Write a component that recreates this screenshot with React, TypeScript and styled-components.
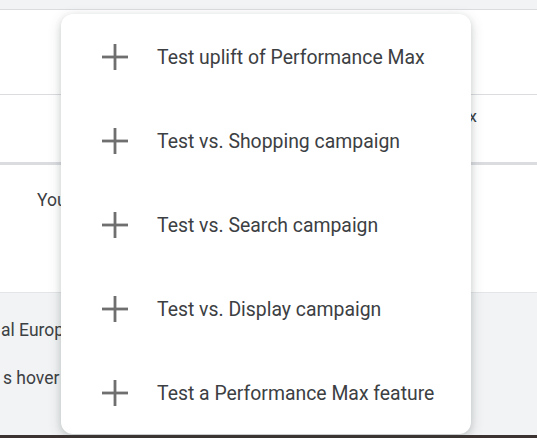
import React from "react";
import styled, { createGlobalStyle } from "styled-components";

const Global = createGlobalStyle`
  html, body { margin: 0; padding: 0; background: #ffffff; }
  body { font-family: Roboto, "Liberation Sans", Arial, sans-serif; overflow: hidden; }
`;

const Page = styled.div`
  position: relative;
  width: 537px;
  height: 438px;
  display: flex;
  flex-direction: column;
  overflow: hidden;
  background: #fff;
`;

const TopBand = styled.div`
  height: 9px;
  background: #f1f3f4;
  border-bottom: 1px solid #dadce0;
  flex: none;
`;

const Section = styled.div<{ $h: number; $border?: string; $bg?: string }>`
  height: ${(p) => p.$h}px;
  flex: none;
  background: ${(p) => p.$bg || "#fff"};
  border-bottom: ${(p) => p.$border || "none"};
  box-sizing: border-box;
  display: flex;
  flex-direction: column;
  color: #3c4043;
  white-space: nowrap;
`;

const HeaderCell = styled.div`
  display: flex;
  justify-content: flex-end;
  padding: 11px 60px 0 0;
  font-size: 17px;
  line-height: 20px;
  color: #3c4043;
`;

const BodyText = styled.div`
  padding: 25px 0 0 37px;
  font-size: 17.5px;
  line-height: 20px;
  color: #3c4043;
`;

const GreyText = styled.div<{ $top: number; $indent: number }>`
  margin-top: ${(p) => p.$top}px;
  padding-left: ${(p) => p.$indent}px;
  font-size: 17.5px;
  line-height: 20px;
  color: #3c4043;
`;

const BottomBar = styled.div`
  flex: 1;
  background: #3b3331;
`;

const Menu = styled.div`
  position: absolute;
  left: 61px;
  top: 14px;
  width: 410px;
  height: 420px;
  background: #fff;
  border-radius: 12px;
  box-shadow: 0 2px 6px rgba(60, 64, 67, 0.15), 0 4px 14px rgba(60, 64, 67, 0.18);
  display: flex;
  flex-direction: column;
  overflow: hidden;
`;

const Item = styled.div`
  height: 84px;
  flex: none;
  display: flex;
  align-items: center;
  padding: 3px 0 0 41px;
  box-sizing: border-box;
  gap: 29px;
  font-size: 19.4px;
  color: #3c4043;
`;

const PlusSvg = styled.svg`
  flex: none;
  margin-top: -2px;
`;

const PlusIcon = () => (
  <PlusSvg width="26" height="26" viewBox="0 0 26 26" aria-hidden="true">
    <rect x="11.6" y="0" width="2.8" height="26" fill="#6f6f6f" />
    <rect x="0" y="11.6" width="26" height="2.8" fill="#6f6f6f" />
  </PlusSvg>
);

const items = [
  "Test uplift of Performance Max",
  "Test vs. Shopping campaign",
  "Test vs. Search campaign",
  "Test vs. Display campaign",
  "Test a Performance Max feature",
];

export default function App() {
  return (
    <>
      <Global />
      <Page>
        <TopBand />
        <Section $h={85} $border="1px solid #dadce0" />
        <Section $h={70} $border="3px solid #dadce0">
          <HeaderCell>Max</HeaderCell>
        </Section>
        <Section $h={128} $border="1px solid #e3e5e8">
          <BodyText>Your experiment</BodyText>
        </Section>
        <Section $h={142} $bg="#f1f3f4">
          <GreyText $top={27} $indent={1}>al Europe</GreyText>
          <GreyText $top={28} $indent={3}>s hover</GreyText>
        </Section>
        <BottomBar />
        <Menu>
          {items.map((t) => (
            <Item key={t}>
              <PlusIcon />
              <span>{t}</span>
            </Item>
          ))}
        </Menu>
      </Page>
    </>
  );
}
